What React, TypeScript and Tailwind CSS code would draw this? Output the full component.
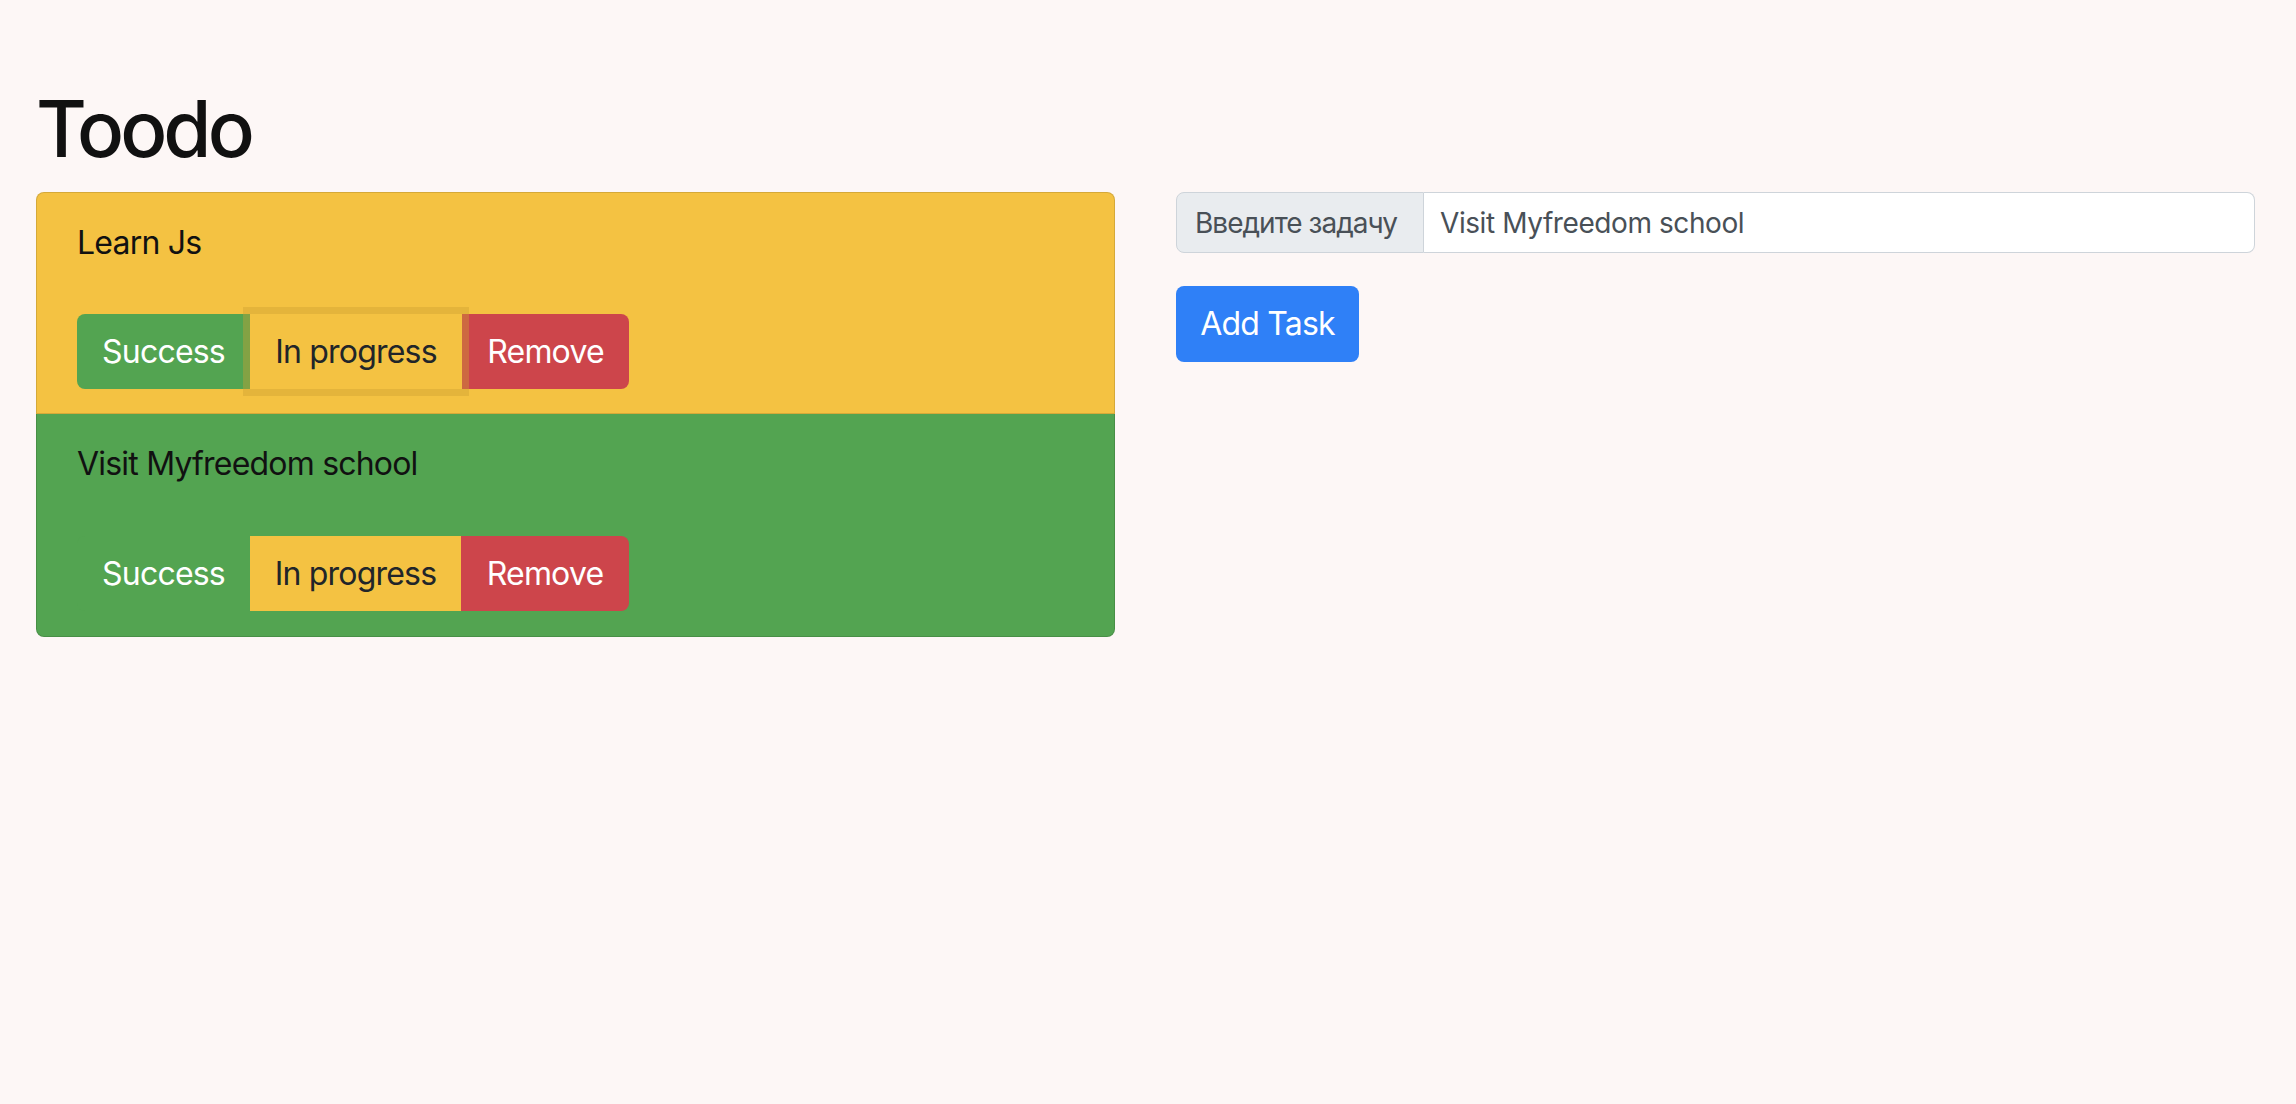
import React from "react";

function Btn({
  label,
  className,
}: {
  label: string;
  className: string;
}) {
  return (
    <button
      type="button"
      className={
        "flex h-[75px] items-center justify-center whitespace-nowrap border border-transparent text-[32px] leading-[48px] tracking-[-0.025em] " +
        className
      }
    >
      {label}
    </button>
  );
}

export default function App() {
  return (
    <div
      className="min-h-screen bg-[#fdf7f6] pt-[82px] pl-[36px] pr-[41px]"
      style={{ fontFamily: "Inter, 'Noto Sans CJK SC', sans-serif" }}
    >
      <h1 className="mb-[16px] text-[78px] font-medium leading-[94px] tracking-[-0.05em] text-[#111]">
        Toodo
      </h1>
      <div className="grid grid-cols-2 gap-x-[61px]">
        <ul className="flex flex-col">
          <li className="rounded-t-[8px] border border-black/[0.125] bg-[#f4c242] px-[40px] pt-[26px] pb-[24px]">
            <div className="text-[32px] leading-[48px] tracking-[-0.025em] text-[#111]">Learn Js</div>
            <div className="mt-[47px] flex">
              <Btn label="Success" className="w-[173px] rounded-l-[8px] bg-[#53a451] text-white" />
              <Btn
                label="In progress"
                className="relative z-10 w-[212px] bg-[#f4c242] text-[#212529] shadow-[0_0_0_7px_rgba(205,160,50,0.4)]"
              />
              <Btn label="Remove" className="w-[167px] rounded-r-[8px] bg-[#cd454b] text-white" />
            </div>
          </li>
          <li className="rounded-b-[8px] border border-t-0 border-black/[0.125] bg-[#53a451] px-[40px] pt-[26px] pb-[25px]">
            <div className="text-[32px] leading-[48px] tracking-[-0.025em] text-[#111]">
              Visit Myfreedom school
            </div>
            <div className="mt-[48px] flex">
              <Btn label="Success" className="w-[173px] rounded-l-[8px] bg-[#53a451] text-white" />
              <Btn label="In progress" className="w-[211px] bg-[#f4c242] text-[#212529]" />
              <Btn label="Remove" className="w-[168px] rounded-r-[8px] bg-[#cd454b] text-white" />
            </div>
          </li>
        </ul>
        <div className="flex flex-col items-start">
          <div className="flex h-[61px] w-full">
            <span className="flex w-[248px] shrink-0 items-center whitespace-nowrap rounded-l-[8px] border border-[#ced4da] bg-[#e9ecef] px-[18px] text-[28px] leading-[42px] tracking-[-0.035em] text-[#495057]">
              Введите задачу
            </span>
            <input
              readOnly
              value="Visit Myfreedom school"
              className="min-w-0 flex-1 rounded-r-[8px] border border-l-0 border-[#ced4da] bg-white px-[16px] text-[28px] leading-[42px] tracking-[-0.015em] text-[#495057] outline-none"
              style={{ fontFamily: "Inter, sans-serif" }}
            />
          </div>
          <button
            type="button"
            className="mt-[33px] flex h-[76px] w-[183px] items-center justify-center rounded-[8px] bg-[#2f80f7] text-[32px] leading-[48px] tracking-[-0.025em] text-white"
          >
            Add Task
          </button>
        </div>
      </div>
    </div>
  );
}
